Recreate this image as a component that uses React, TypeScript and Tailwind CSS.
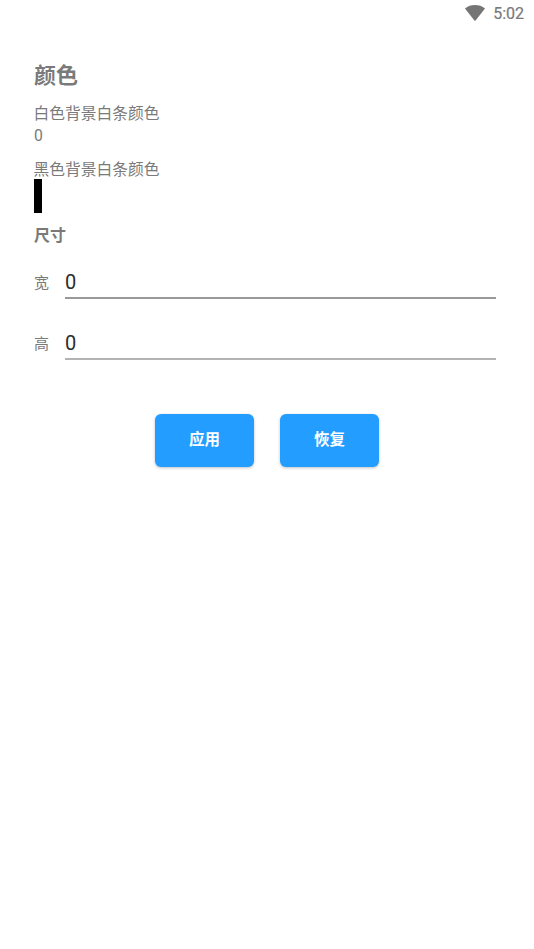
import React from "react";

export default function App() {
  return (
    <div className="w-[534px] h-[949px] bg-white overflow-hidden font-['Roboto','Noto_Sans_CJK_SC',sans-serif] text-[#7a7a7a]">
      <div className="h-[28px] flex items-center justify-end pr-[10px]">
        <svg width="20" height="16" viewBox="0 0 20 16" className="mr-[8px] -mt-[2px]">
          <path d="M0 3.4C2.8 1.2 6.2 0 10 0s7.2 1.2 10 3.4L10.6 15.4a.8.8 0 0 1-1.2 0z" fill="#757575" />
        </svg>
        <span className="text-[16px] font-normal leading-[28px] [-webkit-text-stroke:0.2px_#757575]">5:02</span>
      </div>
      <div className="pl-[34px] pr-[38px]">
        <h1 className="text-[22px] font-bold leading-[32px] mt-[32px]">颜色</h1>
        <div className="text-[15.75px] leading-[20px] mt-[12px] -ml-[0.5px]">白色背景白条颜色</div>
        <div className="text-[15.75px] leading-[22px] mt-[1px]">0</div>
        <div className="text-[15.75px] leading-[19px] mt-[13px] -ml-[0.5px]">黑色背景白条颜色</div>
        <div className="w-[8px] h-[34px] bg-black"></div>
        <div className="text-[16px] font-bold leading-[22px] mt-[12px]">尺寸</div>
        <div className="flex items-start mt-[21px]">
          <span className="w-[31px] text-[15px] leading-[22px] mt-[4px]">宽</span>
          <div className="flex-1 h-[31px] border-b-2 border-[#999999] text-[20px] leading-[28px] text-[#2b2b2b]">0</div>
        </div>
        <div className="flex items-start mt-[30px]">
          <span className="w-[31px] text-[15px] leading-[22px] mt-[4px]">高</span>
          <div className="flex-1 h-[31px] border-b-2 border-[#b3b3b3] text-[20px] leading-[28px] text-[#2b2b2b]">0</div>
        </div>
        <div className="flex justify-center gap-[26px] mt-[54px] w-[466px]">
          <button className="w-[99px] h-[53px] pt-[1px] rounded-[6px] bg-[#239dff] text-white text-[15.5px] font-bold shadow-[0_1px_3px_rgba(0,0,0,0.25)]">应用</button>
          <button className="w-[99px] h-[53px] pt-[1px] rounded-[6px] bg-[#239dff] text-white text-[15.5px] font-bold shadow-[0_1px_3px_rgba(0,0,0,0.25)]">恢复</button>
        </div>
      </div>
    </div>
  );
}
